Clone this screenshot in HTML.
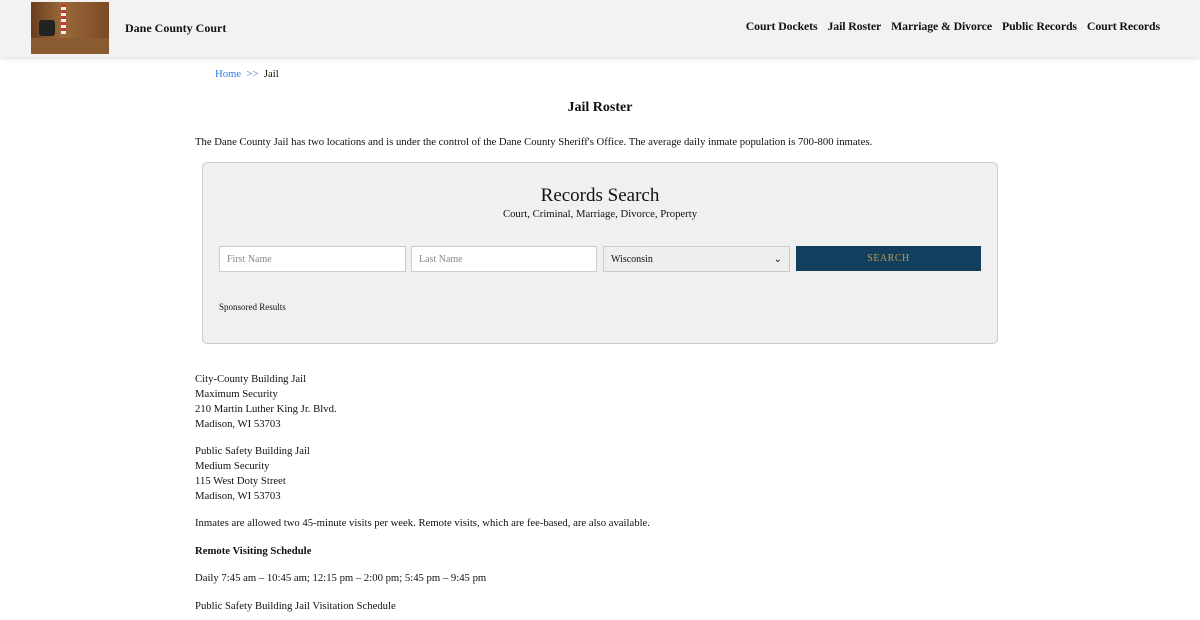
<!DOCTYPE html>
<html><head><style>
body{margin:0;font-family:"Liberation Serif",serif;color:#111;background:#fff;font-size:10.7px}
.hdr{height:57px;background:#f2f2f2;box-shadow:0 2px 4px rgba(0,0,0,.12);position:relative}
.logo{position:absolute;left:31px;top:2px;width:78px;height:52px;background:linear-gradient(90deg,#6a3d1e,#9a6a3a 40%,#7b4a25);}
.logo .chair{position:absolute;left:8px;top:18px;width:16px;height:16px;background:#222;border-radius:3px}
.logo .flag{position:absolute;left:30px;top:2px;width:5px;height:30px;background:repeating-linear-gradient(#c33 0 3px,#eee 3px 6px)}
.logo .desk{position:absolute;left:0;bottom:0;width:78px;height:16px;background:#8a5a30}
.brand{position:absolute;left:125px;top:21px;font-size:12px;font-weight:bold}
nav{position:absolute;right:40px;top:19px;font-size:11.8px;font-weight:bold;letter-spacing:-0.1px}
nav span{margin-left:10px}
.bc{position:absolute;left:215px;top:68px}
.bc a{color:#2a7ae2}
h1{position:absolute;left:0;width:1200px;top:100px;margin:0;text-align:center;font-size:14px}
.p{position:absolute;left:195px}
.box{position:absolute;left:202px;top:162px;width:794px;height:180px;background:#f0f0f0;border:1px solid #ccc;border-radius:5px}
.box .t{position:absolute;top:22px;width:100%;text-align:center;font-size:19px}
.box .s{position:absolute;top:45px;width:100%;text-align:center;font-size:10.7px}
.in{position:absolute;top:83px;height:26px;border:1px solid #ccc;background:#fff;box-sizing:border-box;color:#888;padding:7px 7px;font-size:10px}
.btn{position:absolute;left:593px;top:83px;width:185px;height:25px;background:#123f5e;color:#b99a52;text-align:center;line-height:26px;font-size:10px;letter-spacing:.5px}
</style></head><body>
<div class="hdr"><div class="logo"><div class="desk"></div><div class="chair"></div><div class="flag"></div></div>
<div class="brand">Dane County Court</div>
<nav><span>Court Dockets</span><span>Jail Roster</span><span>Marriage &amp; Divorce</span><span>Public Records</span><span>Court Records</span></nav></div>
<div class="bc"><a>Home</a> &nbsp;<a>&gt;&gt;</a>&nbsp; Jail</div>
<h1>Jail Roster</h1>
<div class="p" style="top:136px">The Dane County Jail has two locations and is under the control of the Dane County Sheriff's Office. The average daily inmate population is 700-800 inmates.</div>
<div class="box"><div class="t">Records Search</div><div class="s">Court, Criminal, Marriage, Divorce, Property</div>
<div class="in" style="left:16px;width:187px">First Name</div>
<div class="in" style="left:208px;width:186px">Last Name</div>
<div class="in" style="left:400px;width:187px;background:#eee;color:#111">Wisconsin<span style="float:right">⌄</span></div>
<div class="btn">SEARCH</div>
<div style="position:absolute;left:16px;top:139px;font-size:9px">Sponsored Results</div></div>
<div class="p" style="top:372px;line-height:15px">City-County Building Jail<br>Maximum Security<br>210 Martin Luther King Jr. Blvd.<br>Madison, WI 53703</div>
<div class="p" style="top:444px;line-height:15px">Public Safety Building Jail<br>Medium Security<br>115 West Doty Street<br>Madison, WI 53703</div>
<div class="p" style="top:517px">Inmates are allowed two 45-minute visits per week. Remote visits, which are fee-based, are also available.</div>
<div class="p" style="top:545px;font-weight:bold">Remote Visiting Schedule</div>
<div class="p" style="top:572px">Daily 7:45 am – 10:45 am; 12:15 pm – 2:00 pm; 5:45 pm – 9:45 pm</div>
<div class="p" style="top:600px">Public Safety Building Jail Visitation Schedule</div>
</body></html>
